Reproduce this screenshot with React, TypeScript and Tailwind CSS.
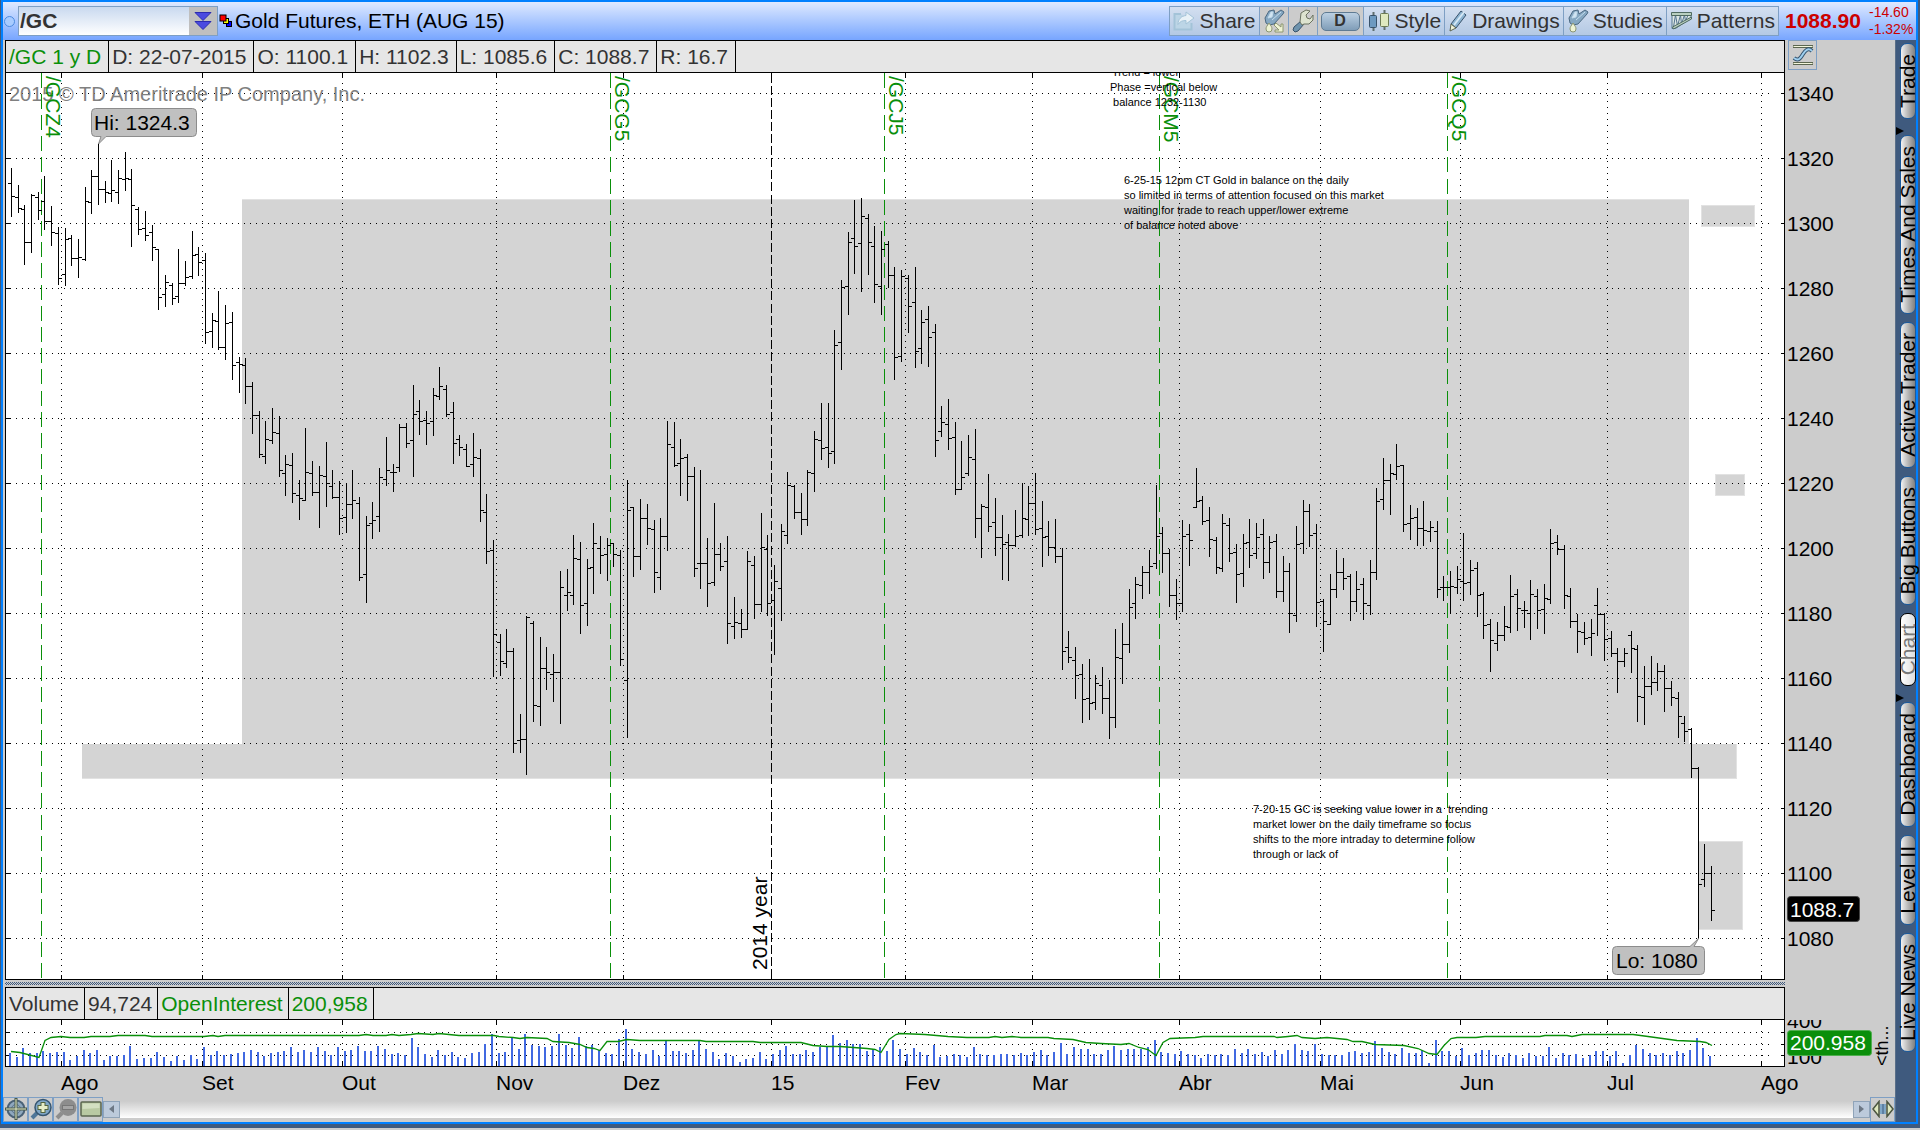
import type { ReactNode } from "react";

// Bars are "open,high,low,close", measured down from `top` in thirds of a pixel
const priceSegments: { top: number; bars: string }[] = [
  {
    top: 140,
    bars: `130,85,230,169 172,136,218,205 208,196,374,307 307,163,338,166 172,157,239,211 184,109,269,244
      244,199,317,277 280,262,434,415 403,265,437,298 295,286,377,355 355,298,413,352 358,142,362,184
      187,91,221,109 109,10,194,148 148,124,188,157 160,61,185,151 157,91,191,115 118,37,152,115
      118,88,320,196 208,202,284,268 265,214,302,286 277,256,362,322 328,328,509,472 463,406,500,427
      436,430,494,475 469,328,488,430 430,364,437,412 409,274,416,346 343,322,407,367 361,340,611,577
      574,520,623,541 544,454,629,622 622,496,659,550 547,517,719,676 667,652,758,673 676,655,791,739
      739,727,881,826 826,814,953,943 949,844,971,898 901,805,911,877 880,829,1010,991 1000,946,1067,973
      976,940,1088,1060 1066,1021,1139,1075 1081,865,1082,997 1000,964,1067,1057 1057,979,1163,1006
      1009,907,1100,1030 1039,991,1076,1072 1072,1024,1184,1135 1132,1030,1178,1093 1093,991,1136,1081
      1090,1072,1322,1312 1303,1129,1388,1156 1150,1087,1196,1141 1129,985,1175,1012 1018,892,1037,991
      997,973,1055,997 982,853,995,862 862,850,923,910 901,736,1010,823 814,781,884,844 841,814,914,850
      844,745,887,766 769,682,779,739 748,736,830,823 817,787,971,910 898,886,947,922 928,913,979,979
      973,880,1010,952`,
  },
  {
    top: 360,
    bars: `295,268,485,451 457,403,611,574 571,541,950,823 847,823,947,904 910,808,923,874 874,865,1178,1150
      1141,1063,1178,1138 1138,769,1244,772 790,784,1085,1036 1039,832,1097,925 925,862,989,937
      943,883,1025,937 937,634,1091,682 706,628,752,697 706,526,734,595 598,547,821,736 730,598,797,625
      622,490,701,550 565,529,641,586 583,535,662,556 550,550,620,583 586,571,917,898 961,361,1133,451
      442,442,650,589 589,418,629,475 475,433,554,505 508,481,698,637 652,475,689,529 529,184,572,253
      262,187,320,316 310,238,407,295 292,283,422,349 349,322,650,625 610,331,686,610 610,535,740,670
      667,430,677,583 583,550,632,619 604,529,851,790 799,712,836,787 790,748,833,808 808,574,809,604
      616,589,776,733 733,460,755,562 568,526,767,730 721,616,884,664 685,493,782,514 526,337,551,376
      379,376,476,457 457,400,524,478 478,331,497,337 340,214,395,238 241,130,299,265 262,130,323,280`,
  },
  {
    top: 180,
    bars: `814,451,851,496 487,301,569,322 319,157,404,187 175,61,281,199 190,55,335,109 115,103,284,187
      199,139,368,313 319,154,404,208 193,184,323,286 286,262,599,532 529,271,545,289 295,286,458,379
      367,262,563,514 505,391,551,427 418,379,560,472 457,433,830,781 754,679,770,727 733,658,809,775
      772,727,944,928 928,784,929,892 880,766,887,832 838,748,1073,1015 1015,973,1133,979 982,883,1055,1039
      1027,955,1127,1072 1072,1006,1199,1093 1087,1063,1202,1096 1096,991,1100,1069 1066,910,1073,1015
      1018,919,1067,970 970,880,1063,1048 1045,964,1160,1072`,
  },
  {
    top: 440,
    bars: `289,244,347,322 322,238,368,349 349,325,689,634 622,574,668,652 661,622,776,706 703,673,848,778
      775,658,839,790 787,706,809,730 736,682,821,775 775,721,896,832 832,568,863,652 655,550,731,613
      613,448,638,502 490,412,536,433 436,379,476,397 397,331,461,379 370,136,386,289 280,262,398,340
      340,328,500,466 466,418,539,490 490,241,515,289 283,253,377,301 202,85,203,184 181,169,254,244
      241,202,350,298 301,292,401,382 385,223,395,250 256,235,365,340 337,313,488,403 400,283,440,310
      307,238,383,346 340,250,356,292 283,238,416,367 367,289,398,307 304,283,473,454 454,349,485,394
      394,370,578,520 526,259,545,313 310,181,341,214 214,193,320,286 280,253,560,487 484,478,635,544
      553,403,554,448 448,331,473,397 397,355,449,415 409,403,542,484 484,394,515,448 433,415,539,490
      496,361,524,397 397,145,419,184 178,55,209,121 121,73,224,100 103,13,119,79 76,76,275,253
      250,196,299,235 232,205,317,265 265,184,317,271 274,244,305,262 274,244,473,448 442,409,482,442
      442,394,521,439 442,379,461,418 424,280,482,430 427,361,464,391`,
  },
  {
    top: 500,
    bars: `205,187,350,286 283,277,416,376 373,358,515,421 430,367,452,406 406,319,422,379 382,226,398,289
      283,268,392,325 331,304,383,331 340,241,419,283 289,268,386,331 328,253,401,295 298,88,311,130
      127,106,164,148 148,136,326,286 289,265,383,364 364,343,458,394 397,367,434,415 412,358,467,400
      316,265,407,343 343,340,482,418 415,394,470,460 460,445,578,484 484,445,500,460 406,394,518,445
      448,436,665,589 592,499,674,559 559,469,584,547 547,490,572,514 514,496,635,565 565,544,617,592
      595,577,713,649 670,649,725,694 688,685,833,805 805,802,1316,1153 1138,1033,1160,1120 1120,1099,1262,1231`,
  },
];

const volumes = [
  13, 9, 18, 13, 13, 15, 13, 14, 14, 6, 10, 16, 13, 16, 6, 10, 10, 11, 20, 7, 8, 8, 14, 9, 5, 10, 6, 11, 7, 19,
  11, 15, 11, 12, 13, 14, 16, 14, 10, 13, 14, 15, 19, 14, 16, 14, 19, 15, 11, 19, 15, 16, 20, 15, 15, 20, 17, 12,
  13, 11, 28, 19, 12, 9, 16, 11, 14, 9, 8, 13, 14, 22, 32, 13, 14, 28, 17, 32, 21, 20, 19, 20, 32, 21, 18, 29,
  20, 21, 16, 13, 12, 27, 37, 17, 14, 12, 16, 10, 25, 15, 15, 13, 16, 25, 17, 14, 7, 13, 10, 4, 7, 8, 14, 7, 12,
  16, 20, 12, 12, 16, 14, 19, 19, 31, 23, 26, 22, 22, 15, 17, 19, 15, 26, 17, 12, 18, 14, 11, 21, 9, 10, 12, 11,
  9, 19, 12, 11, 11, 12, 12, 11, 13, 11, 14, 16, 11, 14, 23, 12, 19, 17, 17, 12, 12, 16, 20, 16, 17, 17, 17, 19,
  26, 14, 13, 12, 15, 12, 11, 8, 12, 11, 12, 11, 17, 13, 17, 12, 14, 10, 16, 12, 16, 22, 16, 15, 22, 12, 11, 11,
  11, 14, 15, 13, 14, 25, 18, 14, 12, 18, 13, 13, 16, 3, 26, 15, 15, 10, 18, 11, 13, 16, 16, 11, 9, 13, 11, 8,
  13, 10, 10, 19, 8, 13, 11, 12, 8, 11, 15, 15, 10, 15, 3, 11, 21, 17, 13, 11, 13, 11, 15, 13, 16, 28, 18, 10,
];

const openInterest =
  "11,1051 20,1052 39,1057 45,1040 51,1037 61,1036 70,1037 84,1037 91,1036 110,1036 118,1035 145,1035 152,1036 " +
  "204,1036 213,1035 218,1036 225,1035 359,1035 366,1034 373,1035 386,1035 392,1034 399,1035 411,1034 418,1033 " +
  "433,1034 439,1033 459,1035 494,1035 499,1036 513,1037 520,1038 527,1037 547,1038 553,1041 569,1042 580,1044 " +
  "587,1047 594,1048 600,1050 607,1041 618,1041 627,1039 640,1040 700,1040 706,1041 753,1041 760,1042 801,1042 " +
  "813,1045 827,1046 840,1046 867,1048 875,1049 881,1052 889,1039 896,1034 900,1033 925,1034 948,1036 967,1037 " +
  "989,1037 995,1036 1002,1037 1012,1036 1021,1037 1048,1037 1054,1038 1073,1039 1086,1042 1101,1043 1121,1044 " +
  "1129,1043 1139,1047 1148,1049 1156,1055 1163,1042 1170,1038 1195,1037 1203,1036 1274,1036 1277,1037 1288,1036 " +
  "1297,1035 1302,1037 1315,1038 1327,1037 1347,1039 1353,1041 1362,1041 1375,1044 1404,1045 1418,1048 1429,1053 " +
  "1437,1054 1444,1045 1451,1038 1457,1037 1476,1037 1485,1036 1540,1036 1545,1035 1567,1035 1572,1036 1582,1034 " +
  "1633,1034 1648,1036 1677,1040 1700,1041 1706,1042 1712,1045";

const months = [
  { label: "Ago", x: 61 },
  { label: "Set", x: 202 },
  { label: "Out", x: 342 },
  { label: "Nov", x: 496 },
  { label: "Dez", x: 623 },
  { label: "15", x: 771, newYear: true },
  { label: "Fev", x: 905 },
  { label: "Mar", x: 1032 },
  { label: "Abr", x: 1179 },
  { label: "Mai", x: 1320 },
  { label: "Jun", x: 1460 },
  { label: "Jul", x: 1607 },
  { label: "Ago", x: 1761 },
];

const contracts = [
  { label: "/GCZ4", x: 41 },
  { label: "/GCG5", x: 610 },
  { label: "/GCJ5", x: 884 },
  { label: "/GCM5", x: 1159 },
  { label: "/GCQ5", x: 1447 },
];

const prices = [1340, 1320, 1300, 1280, 1260, 1240, 1220, 1200, 1180, 1160, 1140, 1120, 1100, 1080];

const notes = [
  { x: 1112, y: 76, lines: ["Trend = lower"] },
  { x: 1110, y: 91, lines: ["Phase =vertical below", " balance 1232-1130"] },
  {
    x: 1124,
    y: 184,
    lines: [
      "6-25-15 12pm CT Gold in balance on the daily",
      "so limited in terms of attention focused on this market",
      "waiting for trade to reach upper/lower extreme",
      "of balance noted above",
    ],
  },
  {
    x: 1253,
    y: 813,
    lines: [
      "7-20-15 GC is seeking value lower in a  trending",
      "market lower on the daily timeframe so focus",
      "shifts to the more intraday to determine follow",
      "through or lack of",
    ],
  },
];

const sideTabs = [
  { label: "Trade" },
  { label: "Times And Sales", arrow: true },
  { label: "Active Trader" },
  { label: "Big Buttons" },
  { label: "Chart", active: true },
  { label: "Dashboard", arrow: true },
  { label: "Level II" },
  { label: "Live News" },
];

const barX = (i: number) => Math.round(11 + i * 6.693);
const priceY = (price: number) => 93 + (1340 - price) * 3.25;

function buildBars() {
  let d = "";
  let i = 0;
  for (const { top, bars } of priceSegments) {
    for (const bar of bars.trim().split(/\s+/)) {
      const [o, h, l, c] = bar.split(",").map((v) => top + Math.floor(Number(v) / 3));
      const x = barX(i++);
      d += `M${x + 0.5} ${h}V${l + 1}M${x - 3} ${o + 0.5}H${x}M${x} ${c + 0.5}H${x + 4}`;
    }
  }
  return d;
}

const barsPath = buildBars();

const PriceChart = () => (
  <svg viewBox="5 73 1890 907" className="block h-auto w-full font-['Liberation_Sans',sans-serif] text-[21px]">
    <rect x="5" y="73" width="1780" height="907" fill="#fff" />
    <g fill="#d4d4d4" shapeRendering="crispEdges">
      <path d="M242 200H1689V744H1737V778H82V744H242Z" />
      <rect x="1702" y="206" width="53" height="20" />
      <rect x="1716" y="475" width="29" height="20" />
      <rect x="1699" y="842" width="43" height="87" />
    </g>
    <g stroke="#e2e2e2" fill="none" shapeRendering="crispEdges">
      <path d="M242 199.5H1689M82 778.5H1737M1736.5 744V778" />
      <rect x="1701.5" y="205.5" width="53" height="21" />
      <rect x="1715.5" y="474.5" width="29" height="21" />
      <path d="M1699 841.5H1742.5V929.5H1699" />
    </g>
    <g stroke="#000" shapeRendering="crispEdges">
      {prices.map((p) => (
        <g key={p}>
          <line x1="16" x2="1770" y1={priceY(p) + 0.5} y2={priceY(p) + 0.5} strokeDasharray="1 5" />
          <path d={`M6 ${priceY(p) + 0.5}h5M1781 ${priceY(p) + 0.5}h4`} />
        </g>
      ))}
      {months.map((m) => (
        <g key={m.x}>
          {m.newYear ? (
            <line x1={m.x + 0.5} x2={m.x + 0.5} y1="978" y2="73" strokeDasharray="9 3.1" />
          ) : (
            <line x1={m.x + 0.5} x2={m.x + 0.5} y1="83" y2="974" strokeDasharray="1 5" />
          )}
          <path d={`M${m.x + 0.5} 73v5M${m.x + 0.5} 975v4`} />
        </g>
      ))}
    </g>
    <text x="9" y="101" fill="#808080" className="text-[20px]">
      2015 © TD Ameritrade IP Company, Inc.
    </text>
    {contracts.map((c) => (
      <g key={c.label} fill="#0a8f0a">
        <line
          x1={c.x + 0.5}
          x2={c.x + 0.5}
          y1="978"
          y2="73"
          stroke="#0a8f0a"
          strokeDasharray="15 6.2"
          shapeRendering="crispEdges"
        />
        <text transform={`translate(${c.x + 5} 76) rotate(90)`}>{c.label}</text>
      </g>
    ))}
    <path d={barsPath} stroke="#000" fill="none" shapeRendering="crispEdges" />
    <g className="text-[11px]">
      {notes.map((n) =>
        n.lines.map((line, i) => (
          <text key={line} x={n.x} y={n.y + i * 15} className="whitespace-pre">
            {line}
          </text>
        )),
      )}
    </g>
    <text transform="translate(767 970) rotate(-90)">2014 year</text>
    <g fill="#c0c0c0" stroke="#8c8c8c">
      <path d="M95.5 108.500H192.500q4 0 4 4V132.500q0 4 -4 4H106L98.500 144L101 136.500H95.500q-4 0 -4 -4V112.500q0 -4 4 -4Z" />
      <path d="M1616.500 946.500H1690L1698.500 938.500L1694 946.500H1700.500q4 0 4 4V970.500q0 4 -4 4H1616.500q-4 0 -4 -4V950.500q0 -4 4 -4Z" />
    </g>
    <text x="94" y="130">
      Hi: 1324.3
    </text>
    <text x="1616" y="968">
      Lo: 1080
    </text>
    <path d="M5.500 73V979.500H1784.500V73" stroke="#000" fill="none" shapeRendering="crispEdges" />
    {prices.map((p) => (
      <text key={p} x="1787" y={priceY(p) + 8}>
        {p}
      </text>
    ))}
    <rect x="1787.500" y="896.500" width="72" height="25" rx="3" stroke="#444" />
    <text x="1790" y="917" fill="#fff">
      1088.7
    </text>
  </svg>
);

const VolumeChart = () => (
  <svg viewBox="5 1020 1890 76" className="block h-auto w-full font-['Liberation_Sans',sans-serif] text-[21px]">
    <rect x="5" y="1020" width="1780" height="47" fill="#fff" />
    <g stroke="#000" shapeRendering="crispEdges">
      {[1032, 1044, 1055].map((y) => (
        <g key={y}>
          <line x1="16" x2="1770" y1={y + 0.5} y2={y + 0.5} strokeDasharray="1 5" />
          <path d={`M6 ${y + 0.5}h4M1781 ${y + 0.5}h4`} />
        </g>
      ))}
      {months.map((m) => (
        <path key={m.x} d={`M${m.x + 0.5} 1020v5m0 6v1m0 5v1m0 5v1m0 5v1m0 5v1m0 5v5`} />
      ))}
    </g>
    <g fill="#4169e1" shapeRendering="crispEdges">
      {volumes.map((v, i) => (
        <rect key={i} x={barX(i) - 2} y={1066 - v} width="2" height={v} />
      ))}
    </g>
    <polyline
      points={openInterest}
      transform="translate(0 0.5)"
      stroke="#0a8f0a"
      strokeWidth="1.3"
      fill="none"
    />
    <path d="M5.500 1020V1066.500H1784.500V1020" stroke="#000" fill="none" shapeRendering="crispEdges" />
    {months.map((m) => (
      <text key={m.x} x={m.x} y="1090">
        {m.label}
      </text>
    ))}
    <text x="1787" y="1028">
      400
    </text>
    <text x="1787" y="1064">
      100
    </text>
    <rect x="1787.500" y="1030.500" width="84" height="25" rx="3" fill="#0a8f0a" stroke="#4fae4f" />
    <text x="1790" y="1050" fill="#fff">
      200.958
    </text>
    <text transform="translate(1888 1066) rotate(-90)" className="text-[18px]">
      &lt;th...
    </text>
  </svg>
);

const MarkerIcon = ({ arrow }: { arrow?: boolean }) => (
  <svg width="22" height="24" viewBox="0 0 22 24">
    <path d="M3 14 2 9l4-7 5-1 1 4 6-4 3 2-1 2-9 10-5 1z" fill="#86a8c2" stroke="#4b6982" />
    <path d="m5 9 3-6 2 0-1 5zM9 11l9-8" fill="#d3e6f3" stroke="#c4dcec" />
    <path d="M6 14c-2 3-3 4-3 6a3 3 0 0 0 6 0c0-2-1-3-3-6z" fill="#eef3d4" stroke="#8c9672" />
    {arrow && <path d="m13 14 5 4v-3h2v8h-8v-2h4l-5-5z" fill="#eef3d4" stroke="#8c9672" />}
  </svg>
);

const WrenchIcon = () => (
  <svg width="22" height="24" viewBox="0 0 22 24">
    <path d="m9 12 3 3-6 7-3 1-2-2 1-3z" fill="#6f94ae" stroke="#39536b" />
    <path d="M8 13 9 4l5-3 4 1-4 4 1 3 3 1 3-4 0 5-4 4-5 0-2 1z" fill="#dde3cf" stroke="#6b7260" />
  </svg>
);

const ShareIcon = () => (
  <svg width="22" height="20" viewBox="0 0 22 20">
    <path d="M8 3H1.500v15.500h17V12" fill="#bcd5e6" stroke="#a3c3d8" strokeWidth="2" />
    <path d="M13 1l8 6-8 6V9.500c-4 0-6 1-8 4 0-5 3-8.500 8-9z" fill="#e8f1f7" stroke="#a3c3d8" />
  </svg>
);

const CandlesIcon = () => (
  <svg width="24" height="22" viewBox="0 0 24 22">
    <path d="M6.500 2v19M17.500 0v20" stroke="#5f6e6e" strokeWidth="2" />
    <rect x="2.500" y="5.500" width="7" height="12" rx="1" fill="#6d9ac0" stroke="#39536b" />
    <rect x="13.500" y="3.500" width="8" height="13" rx="1" fill="#dfe9c0" stroke="#6b7a55" />
  </svg>
);

const PencilIcon = () => (
  <svg width="20" height="22" viewBox="0 0 20 22">
    <path d="m3 14 10-13 5 4-10 13z" fill="#8db4d2" stroke="#39536b" />
    <path d="m6 15 10-13" stroke="#d5e8f5" strokeWidth="2" />
    <path d="m3 14 5 4-6 3z" fill="#f0f2d8" stroke="#5c6450" />
  </svg>
);

const PatternsIcon = () => (
  <svg width="23" height="20" viewBox="0 0 22 20">
    <path d="M1.500 2.500H20.500V7L5 17.500H1.500z" fill="#dde7e4" stroke="#54748f" />
    <path d="m3 16 2-12 2 11 3-11 1 9 3-9 1 6 3-7" stroke="#54748f" fill="none" />
    <path d="M1 1.500h20v3H1zM3 18 21 8V6L2 16z" fill="#b9cfc0" stroke="#4f6a60" />
  </svg>
);

function ToolButton({ icon, label, title }: { icon: ReactNode; label?: string; title?: string }) {
  return (
    <button
      aria-label={label ? undefined : title}
      className={
        label
          ? "flex h-[30px] items-center gap-1 border-r border-y border-[#7e9fc4] bg-gradient-to-b from-[#d3dff0] to-[#b4c9e4] px-[3px] text-[#333]"
          : "flex h-[30px] items-center justify-center border-r border-y border-[#7e9fc4] bg-[#ccc] px-[3px] text-[#333]"
      }
    >
      {icon}
      {label}
    </button>
  );
}

const TitleBar = () => (
  <header className="flex h-[38px] items-center bg-gradient-to-b from-[#dfe9ff] to-[#77a5ff]">
    <span className="ml-px size-[11px] rounded-full border border-[#4d8be0] bg-[#a9ccff]" />
    <div className="ml-[3px] flex h-[30px] w-[200px] border border-[#7e9fc4]">
      <input
        aria-label="Symbol"
        defaultValue="/GC"
        className="min-w-0 flex-1 bg-gradient-to-b from-[#c9d9ef] to-white px-px font-bold text-[#333] outline-none"
      />
      <button aria-label="Symbol list" className="flex w-[28px] items-center justify-center bg-[#bfbfbf]">
        <svg width="18" height="18" viewBox="0 0 18 18" fill="#4a4ae0" stroke="#2b2bb0">
          <path d="M1 .5h16L9 8.500zM1 9.500h16L9 17.500z" />
        </svg>
      </button>
    </div>
    <svg width="14" height="14" viewBox="0 0 14 14" className="ml-px" stroke="#000">
      <rect x="7.500" y="7.500" width="5" height="5" fill="#00f" />
      <rect x="4.500" y="4.500" width="5" height="5" fill="#ff0" />
      <rect x="1" y="1" width="6" height="6" fill="#f00" />
    </svg>
    <h1 className="ml-[2px] flex-1 whitespace-nowrap">Gold Futures, ETH (AUG 15)</h1>
    <div className="flex border-l border-[#7e9fc4]">
      <ToolButton icon={<ShareIcon />} label="Share" />
      <ToolButton icon={<MarkerIcon arrow />} title="Edit studies" />
      <ToolButton icon={<WrenchIcon />} title="Settings" />
      <ToolButton
        title="Daily aggregation"
        icon={
          <span className="flex h-[19px] w-[39px] items-center justify-center rounded-[5px] border border-[#5f7b93] bg-gradient-to-b from-[#bcd0e2] to-[#7f9db8] text-base font-bold">
            D
          </span>
        }
      />
      <ToolButton icon={<CandlesIcon />} label="Style" />
      <ToolButton icon={<PencilIcon />} label="Drawings" />
      <ToolButton icon={<MarkerIcon />} label="Studies" />
      <ToolButton icon={<PatternsIcon />} label="Patterns" />
    </div>
    <span className="ml-[6px] w-[84px] font-bold text-[#c00]">1088.90</span>
    <div className="w-[47px] text-[14px] leading-[17px] text-[#c00]">
      <div>-14.60</div>
      <div>-1.32%</div>
    </div>
  </header>
);

type Cell = { text: string; green?: boolean };

const InfoStrip = ({ cells, roomy }: { cells: Cell[]; roomy?: boolean }) => (
  <div className="flex h-[33px] min-w-0 flex-1 border border-black bg-[#e6e6e6]">
    {cells.map((c) => (
      <div
        key={c.text}
        className={`flex items-center border-r border-black pl-[3px] whitespace-nowrap ${
          roomy ? "pr-[7px]" : "pr-[5px]"
        } ${c.green ? "text-[#0a8f0a]" : "text-[#333]"}`}
      >
        {c.text}
      </div>
    ))}
  </div>
);

const SideTabs = () => (
  <nav className="flex w-[21px] flex-col gap-2 border-l border-[#5a6f88] bg-[#3f5a7e] pt-[3px]">
    {sideTabs.map((t) => (
      <div key={t.label} className="flex flex-col items-end">
        {t.arrow && (
          <svg width="20" height="8" viewBox="0 0 20 8">
            <path d="M0 0v8l8-4z" />
          </svg>
        )}
        <button
          className={
            t.active
              ? "flex w-4 justify-center rounded-[7px] border border-black bg-gradient-to-r from-white to-[#ddd] py-[10px] text-[#777]"
              : "flex w-4 justify-center rounded-[7px] border border-[#1c5a9c] bg-gradient-to-r from-[#f2f2f2] to-[#808080] py-[10px]"
          }
        >
          <span className="rotate-180 leading-[18px] whitespace-nowrap [writing-mode:vertical-rl]">{t.label}</span>
        </button>
      </div>
    ))}
  </nav>
);

const iconButton = "flex size-[25px] items-center justify-center border border-[#7e9fc4] bg-[#ccc]";
const scrollButton = "flex size-[17px] items-center justify-center border border-[#8fa3b8] bg-[#bccadb]";

const BottomBar = () => (
  <footer className="flex h-[26px] items-center">
    <button aria-label="Crosshair" className={iconButton}>
      <svg width="22" height="22" viewBox="0 0 22 22">
        <circle cx="11" cy="11" r="8.500" fill="#8fa8bf" stroke="#4b6278" strokeWidth="2" />
        <circle cx="11" cy="11" r="4.500" fill="none" stroke="#5f7890" />
        <path d="M11 0v22M0 11h22" stroke="#4a5a4a" strokeWidth="3" />
        <path d="M11 1v20M1 11h20" stroke="#e6edc8" />
      </svg>
    </button>
    <button aria-label="Zoom in" className={iconButton}>
      <svg width="22" height="22" viewBox="0 0 22 22">
        <path d="m2 20 5-5" stroke="#4f7699" strokeWidth="4" />
        <circle cx="13" cy="9.500" r="8" fill="#7fa6c6" stroke="#35546f" strokeWidth="1.500" />
        <path d="M13 4v11M7.500 9.500h11" stroke="#54653f" strokeWidth="5" />
        <path d="M13 5v9M8.500 9.500h9" stroke="#e6edc8" strokeWidth="3" />
      </svg>
    </button>
    <button aria-label="Zoom out" disabled className={iconButton}>
      <svg width="22" height="22" viewBox="0 0 22 22">
        <path d="m2 20 5-5" stroke="#8d8d8d" strokeWidth="4" />
        <circle cx="13" cy="9.500" r="8.500" fill="#8d8d8d" />
        <rect x="7.500" y="7.500" width="11" height="4" fill="#a5a5a5" stroke="#777" />
      </svg>
    </button>
    <button aria-label="Fit" className={iconButton}>
      <svg width="22" height="16" viewBox="0 0 22 16">
        <rect x="1" y="1" width="20" height="14" rx="1" fill="#b9c9a3" stroke="#5b6650" strokeWidth="1.500" />
        <path d="M2.500 8V2.500h17V7z" fill="#d3dfc2" />
      </svg>
    </button>
    <button aria-label="Scroll left" className={scrollButton}>
      <svg width="5" height="8" viewBox="0 0 5 8" fill="#6d7885">
        <path d="M5 0v8L0 4z" />
      </svg>
    </button>
    <div className="h-[17px] flex-1 bg-gradient-to-b from-[#ccc] to-white" />
    <button aria-label="Scroll right" className={scrollButton}>
      <svg width="5" height="8" viewBox="0 0 5 8" fill="#6d7885">
        <path d="M0 0v8l5-4z" />
      </svg>
    </button>
    <button aria-label="Expand" className={iconButton}>
      <svg width="22" height="18" viewBox="0 0 22 18">
        <path d="M8 4h6v10H8z" fill="#7fa6c6" />
        <path d="M11 4v10" stroke="#3f5a7e" />
        <path d="M1 9 7 1.500v15zM21 9l-6-7.500v15z" fill="#dfe9c0" stroke="#4b5540" strokeWidth="1.500" />
      </svg>
    </button>
  </footer>
);

export default function App() {
  return (
    <div className="bg-[#ccc] pb-[2px] font-['Liberation_Sans',sans-serif] text-[21px] leading-6 text-black">
      <div className="border-r-2 border-b-4 border-l border-[#3f5a7e]">
        <div className="border-2 border-[#0080ff]">
          <TitleBar />
          <div className="flex">
            <main className="min-w-0 flex-1">
              <div className="pl-[2px]">
                <div className="flex">
                  <InfoStrip
                    roomy
                    cells={[
                      { text: "/GC 1 y D", green: true },
                      { text: "D: 22-07-2015" },
                      { text: "O: 1100.1" },
                      { text: "H: 1102.3" },
                      { text: "L: 1085.6" },
                      { text: "C: 1088.7" },
                      { text: "R: 16.7" },
                    ]}
                  />
                  <div className="w-[110px] pl-[3px]">
                    <button
                      aria-label="Show studies"
                      className="flex h-[30px] w-[29px] items-center justify-center border border-[#7e9fc4] bg-[#ccc]"
                    >
                      <svg width="22" height="22" viewBox="0 0 22 22" fill="none">
                        <path d="M1 2.500h20M1 19.500h20" stroke="#5b6650" strokeWidth="3" />
                        <path d="M1.500 2.500h19M1.500 19.500h19" stroke="#f2f5dc" />
                        <path d="M2 14c5 4 7-1 9-4s5-7 9-3" stroke="#35546f" strokeWidth="4" />
                        <path d="M2 14c5 4 7-1 9-4s5-7 9-3" stroke="#9fd0f0" strokeWidth="2" />
                      </svg>
                    </button>
                  </div>
                </div>
                <PriceChart />
                <div className="mr-[110px] py-[2px]">
                  <div className="h-[3px] bg-[repeating-conic-gradient(#3f5a7e_0_25%,#ccc_0_50%)] bg-[length:2px_2px]" />
                </div>
                <div className="mr-[110px] flex">
                  <InfoStrip
                    cells={[
                      { text: "Volume" },
                      { text: "94,724" },
                      { text: "OpenInterest", green: true },
                      { text: "200,958", green: true },
                    ]}
                  />
                </div>
                <VolumeChart />
              </div>
              <BottomBar />
            </main>
            <SideTabs />
          </div>
        </div>
      </div>
    </div>
  );
}
